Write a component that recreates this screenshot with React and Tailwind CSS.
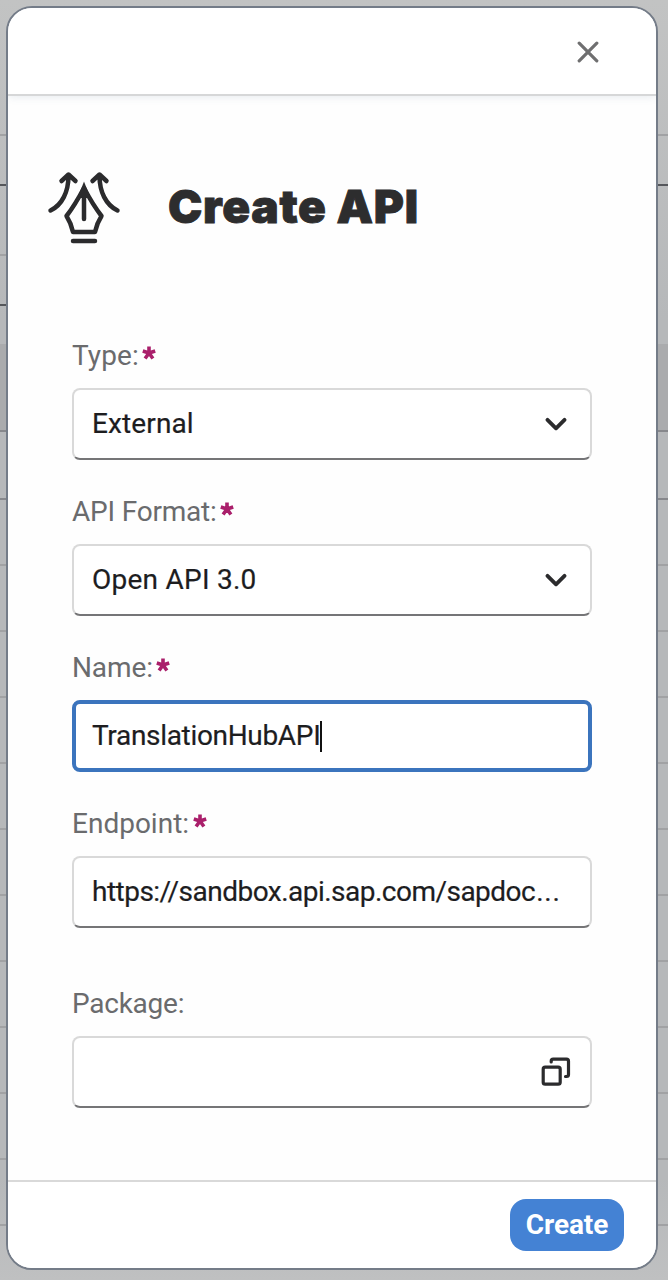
const rows = [
  { h: 'h-[136px]', c: 'border-[#a1a2a4]' },
  { h: 'h-[50px]', c: 'border-[#55575b]' },
  { h: 'h-[70px] w-1/2', c: 'border-[#a1a2a4]' },
  { h: 'h-[50px] w-1/2', c: 'border-[#55575b]' },
  { h: 'h-[38px]', c: 'border-transparent' },
  { h: 'h-[88px] bg-[#aaabad]', c: 'border-[#87888c]' },
  { h: 'h-[68px]', c: 'border-[#87888c]' },
  ...Array.from({ length: 11 }, () => ({ h: 'h-[66px]', c: 'border-[#a1a2a4]' })),
];

function Backdrop() {
  return (
    <div className="h-full w-full bg-[linear-gradient(to_bottom,#c2c3c3,#b6b8ba_25%,#b6b8ba_92%,#bfc0c1)]">
      {rows.map((r, i) => (
        <div key={i} className={`${r.h} ${r.c} box-border border-b-2`} />
      ))}
    </div>
  );
}

function Label({ children, tracking, required }) {
  return (
    <div className="flex h-[33px] items-center whitespace-nowrap pt-px text-[28px] leading-8 text-[#6a6b6d]">
      <span className={tracking}>{children}</span>
      {required && (
        <svg className="ml-[3.500px] -mt-1.5 h-[14px] w-[14px]" viewBox="0 0 14 14" fill="none" stroke="#aa1f6b" strokeWidth="3.6">
          <path d="M7 7V.5M7 7 .8 5M7 7l6.200-2M7 7l-3.900 5.500M7 7l3.900 5.500" />
        </svg>
      )}
    </div>
  );
}

function Field({ focused, children }) {
  return (
    <div
      className={`mt-4 flex h-[72px] w-[520px] items-center justify-between overflow-hidden rounded-lg bg-white text-[28px] text-[#1d1d1f] [-webkit-text-stroke:0.2px_#1d1d1f] ${
        focused ? 'border-4 border-[#3b74bd] px-4' : 'border-2 border-[#d9d9d9] border-b-[#757577] px-[18px]'
      }`}
    >
      {children}
    </div>
  );
}

function Chevron() {
  return (
    <svg className="mr-[5px] h-4 w-[22px]" viewBox="0 0 22 16" fill="none" stroke="#2b2b2d" strokeWidth="3.800" strokeLinecap="round" strokeLinejoin="round">
      <path d="M2.500 3.800 11 12.300 19.500 3.800" />
    </svg>
  );
}

function PenIcon() {
  return (
    <svg className="h-[76px] w-[76px]" viewBox="46 170 76 76" fill="none" stroke="#2b2b2d" strokeWidth="4.500" strokeLinecap="round" strokeLinejoin="round">
      <path d="M50.500 210.500C62 205 68.500 192 68.500 175.500M61.500 181l7-6.500 7 6.500M117.500 210.500C106 205 99.500 192 99.500 175.500M92.500 181l7-6.500 7 6.500" />
      <path d="M84 188Q75 205 66.500 216 71 223 73 232H95Q97 223 101.500 216 93 205 84 188ZM84 192v27M73 241H95" />
      <path d="M84 181.500 77.500 198h13Z" fill="#2b2b2d" stroke="none" />
    </svg>
  );
}

export default function App() {
  return (
    <div className="relative h-[1280px] w-[668px] overflow-hidden font-['Roboto',sans-serif]">
      <Backdrop />
      <div className="absolute left-[6px] top-[6px] flex h-[1264px] w-[652px] flex-col overflow-hidden rounded-[26px] border-2 border-[#747c88] bg-[#fefefe]">
        <header className="z-10 flex h-[88px] shrink-0 items-center justify-end border-b-2 border-[#d6d7d8] bg-white pr-[57px] pt-[2px] shadow-[0_1px_8px_rgba(80,110,140,0.13)]">
          <svg className="h-[22px] w-[22px]" viewBox="0 0 22 22" fill="none" stroke="#6f6f70" strokeWidth="3.200" strokeLinecap="round">
            <path d="M2.200 2.200l17.600 17.600M19.800 2.200 2.200 19.800" />
          </svg>
        </header>
        <main className="flex grow flex-col">
          <div className="mt-[74px] flex h-[76px] items-center pl-[38px]">
            <PenIcon />
            <h1 className="ml-[46px] whitespace-nowrap pb-[3px] font-['Inter',sans-serif] text-[46px] font-black leading-[73px] tracking-[0.7px] text-[#2d2d2e] [-webkit-text-stroke:0.9px_#2d2d2e]">Create API</h1>
          </div>
          <form className="ml-16 mt-[93px] flex flex-col">
            <div className="h-[156px]">
              <Label required tracking="tracking-[0.1px]">Type:</Label>
              <Field>
                <span className="tracking-[0.12px]">External</span>
                <Chevron />
              </Field>
            </div>
            <div className="h-[156px]">
              <Label required tracking="tracking-[-0.2px]">API Format:</Label>
              <Field>
                <span className="tracking-[0.25px]">Open API 3.0</span>
                <Chevron />
              </Field>
            </div>
            <div className="h-[156px]">
              <Label required tracking="tracking-[-0.1px]">Name:</Label>
              <Field focused>
                <span className="flex items-center">
                  <span className="tracking-[-0.32px]">TranslationHubAPI</span>
                  <span className="h-[31px] w-[2px] bg-[#111]" />
                </span>
              </Field>
            </div>
            <div className="h-[180px]">
              <Label required>Endpoint:</Label>
              <Field>
                <span className="whitespace-nowrap tracking-[-0.52px]">
                  https://sandbox.api.sap.com/sapdoc<span className="ml-[1px] tracking-[0.8px]">...</span>
                </span>
              </Field>
            </div>
            <div>
              <Label tracking="tracking-[-0.25px]">Package:</Label>
              <Field>
                <span />
                <svg className="mr-[1px] h-[30px] w-[30px]" viewBox="0 0 30 30" fill="none" stroke="#2b2b2d" strokeWidth="3.200" strokeLinecap="round" strokeLinejoin="round">
                  <rect x="2.200" y="10.200" width="17" height="17" rx="2" />
                  <path d="M10.200 5V4.200q0-2 2-2H25.500q2 0 2 2V17.500q0 2-2 2H24.500" />
                </svg>
              </Field>
            </div>
          </form>
        </main>
        <footer className="flex h-[88px] shrink-0 items-center justify-end border-t-2 border-[#d9d9d9] bg-white pr-8">
          <button className="flex h-[52px] w-[114px] items-center justify-center rounded-2xl bg-[#4482d4] text-[28px] font-bold tracking-[-0.1px] text-white">Create</button>
        </footer>
      </div>
    </div>
  );
}
